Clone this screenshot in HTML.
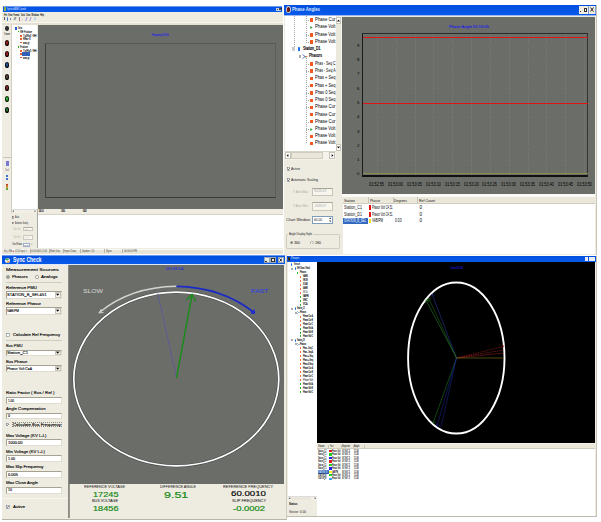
<!DOCTYPE html>
<html><head><meta charset="utf-8">
<style>
html,body{margin:0;padding:0;background:#fff;}
body{width:601px;height:522px;position:relative;overflow:hidden;font-family:"Liberation Sans",sans-serif;}
.a{position:absolute;box-sizing:border-box;}
.bg{background:#EEEBE0;}
.tb{background:linear-gradient(#004fe0,#0a5aea);}
.gr{background:#6B6D69;}
.wh{background:#fff;}
.t{position:absolute;white-space:nowrap;line-height:1;}
</style></head><body>
<!-- ===== TOP-LEFT WINDOW ===== -->
<div class="a bg" style="left:2px;top:6px;width:281px;height:248px;"></div>
<div class="a tb" style="left:3px;top:6px;width:279px;height:5.6px;"></div>
<div class="a" style="left:4px;top:7px;width:2px;height:4px;background:#8fb04a;"></div>
<div class="t" style="left: 7px; top: 7px; font-size: 4px; color: rgb(232, 238, 255); transform-origin: 0px 0px; transform: scaleX(0.455);">SynchroWAVE Console</div>
<div class="a" style="left:276px;top:7.5px;width:5px;height:3px;background:#c8cfdc;"></div>
<div class="a" style="left:276.5px;top:9px;width:1.5px;height:1px;background:#555;"></div>
<div class="a" style="left:278.8px;top:8px;width:1.8px;height:1.5px;border:0.5px solid #444;"></div>
<div class="a" style="left:281px;top:8.3px;width:1px;height:1px;background:#222;"></div>
<div class="a" style="left:3px;top:5.6px;width:279px;height:0.6px;background:#6b9af0;"></div>
<div class="t" style="left: 3.5px; top: 12.8px; font-size: 4px; color: rgb(17, 17, 17); word-spacing: 2px; -webkit-text-stroke: 0.12px rgb(17, 17, 17); transform-origin: 0px 0px; transform: scaleX(0.452);">File View Format Tools Data Windows Help</div>
<!-- toolbar icons -->
<div class="a" style="left:3.6px;top:17.2px;width:1px;height:3px;background:#555;"></div>
<div class="a" style="left:6.6px;top:16.8px;width:1.8px;height:3.8px;background:#3a78d0;border-radius:0.8px;"></div>
<div class="a" style="left:9.5px;top:17.5px;width:1.6px;height:2.6px;background:#5a88c0;"></div>
<div class="a" style="left:14.2px;top:17.2px;width:1.6px;height:3px;background:#9a9a9a;transform:skewX(-20deg);"></div>
<div class="a" style="left:18.6px;top:17.2px;width:1.5px;height:3.4px;background:linear-gradient(#7080c0,#d06050);"></div>
<div class="a" style="left:22px;top:18.5px;width:1.2px;height:1.5px;background:#c8c8c8;"></div>
<div class="a" style="left:25.8px;top:17px;width:1.2px;height:3.5px;background:#9a90e0;transform:skewX(-20deg);"></div>
<div class="a" style="left:29.6px;top:17px;width:1.2px;height:3.5px;background:#a090d0;transform:skewX(-20deg);"></div>
<div class="a" style="left:34.2px;top:17.3px;width:1.5px;height:3px;background:#b8d0f0;border-radius:0.6px;"></div>
<div class="a" style="left:2px;top:21.8px;width:281px;height:1px;background:#f8f6ee;"></div>
<div class="a" style="left:2px;top:22.8px;width:281px;height:2.4px;background:#e4e1d4;"></div>
<!-- left icon strip -->
<div class="a" style="left:3px;top:25px;width:8.5px;height:223px;background:#EFEDE3;border-right:1px solid #d0cdbf;"></div>
<div class="a" style="left:5px;top:26px;width:4.2px;height:5px;border-radius:50%;background:radial-gradient(ellipse at 50% 45%,#3a3a3a 0 12%,#1a1a1a 55%);"></div>
<div class="t" style="left: 3.8px; top: 33px; font-size: 3.5px; color: rgb(51, 51, 51); -webkit-text-stroke: 0.1px rgb(51, 51, 51); transform-origin: 0px 0px; transform: scaleX(0.601);">Tracer</div>
<div class="a" style="left:5px;top:40px;width:4.2px;height:6px;border-radius:50%;background:radial-gradient(ellipse at 50% 45%,#b02020 0 12%,#1a0a0a 55%);"></div>
<div class="a" style="left:5px;top:51px;width:4.2px;height:6px;border-radius:50%;background:radial-gradient(ellipse at 50% 45%,#c02020 0 12%,#1a0a0a 55%);"></div>
<div class="a" style="left:5px;top:62px;width:4.2px;height:6px;border-radius:50%;background:radial-gradient(ellipse at 50% 45%,#3060b0 0 12%,#0a1018 55%);"></div>
<div class="a" style="left:5px;top:74px;width:4.2px;height:6px;border-radius:50%;background:radial-gradient(ellipse at 50% 45%,#6a5040 0 12%,#101010 55%);"></div>
<div class="a" style="left:5px;top:85px;width:4.2px;height:6px;border-radius:50%;background:radial-gradient(ellipse at 50% 45%,#a03030 0 12%,#100808 55%);"></div>
<div class="a" style="left:5px;top:96px;width:4.2px;height:6px;border-radius:50%;background:radial-gradient(ellipse at 50% 45%,#40c040 0 12%,#0a300a 55%);"></div>
<div class="a" style="left:5px;top:107px;width:4.2px;height:6px;border-radius:50%;background:radial-gradient(ellipse at 50% 45%,#2a8a3a 0 12%,#080a08 55%);"></div>
<div class="a" style="left:3px;top:157px;width:8px;height:1px;background:#c8c5b8;"></div>
<div class="a" style="left:5.5px;top:161px;width:3px;height:5px;background:#7a7ad0;"></div>
<div class="t" style="left: 5px; top: 168.5px; font-size: 3px; color: rgb(102, 102, 102); transform-origin: 0px 0px; transform: scaleX(0.725);">Tool</div>
<div class="a" style="left:6px;top:175px;width:2px;height:2px;background:#3a70d0;"></div>
<div class="a" style="left:6px;top:178px;width:2px;height:2px;background:#3a70d0;"></div>
<div class="a" style="left:6px;top:184px;width:2px;height:6px;background:linear-gradient(#c03030,#d0a030,#40a040);"></div>
<!-- tree -->
<div class="a wh" style="left:12px;top:25px;width:25px;height:185px;"></div>
<div class="a" style="left:14.5px;top:26.5px;width:2.5px;height:3px;background:#2a5ad8;"></div>
<div class="t" style="left: 18px; top: 27.3px; font-size: 3.5px; color: rgb(0, 0, 0); -webkit-text-stroke: 0.1px rgb(0, 0, 0); transform-origin: 0px 0px; transform: scaleX(0.54);">Data</div>
<div class="a" style="left:17.5px;top:30.5px;width:1.5px;height:1.5px;background:#30a030;"></div>
<div class="t" style="left: 20px; top: 30.8px; font-size: 3.2px; color: rgb(0, 0, 0); -webkit-text-stroke: 0.1px rgb(0, 0, 0); transform-origin: 0px 0px; transform: scaleX(0.621);">GIE Producer</div>
<div class="a" style="left:20px;top:34.5px;width:1.5px;height:2px;background:#e06030;"></div>
<div class="t" style="left: 22.5px; top: 34.8px; font-size: 3.4px; color: rgb(0, 0, 0); -webkit-text-stroke: 0.1px rgb(0, 0, 0); transform-origin: 0px 0px; transform: scaleX(0.804);">Tx/Rx1 GH</div>
<div class="a" style="left:20px;top:37.5px;width:1.5px;height:2px;background:#e06030;"></div>
<div class="t" style="left: 22.5px; top: 37.8px; font-size: 3.4px; color: rgb(0, 0, 0); -webkit-text-stroke: 0.1px rgb(0, 0, 0); transform-origin: 0px 0px; transform: scaleX(0.71);">RBar 8</div>
<div class="a" style="left:20px;top:41.5px;width:1.5px;height:1.5px;background:#e06030;"></div>
<div class="t" style="left: 22.5px; top: 41.8px; font-size: 3.2px; color: rgb(0, 0, 0); -webkit-text-stroke: 0.1px rgb(0, 0, 0); transform-origin: 0px 0px; transform: scaleX(0.718);">wxx gt</div>
<div class="a" style="left:17.5px;top:46px;width:1.5px;height:1.5px;background:#30a030;"></div>
<div class="t" style="left: 20px; top: 46.3px; font-size: 3.2px; color: rgb(0, 0, 0); -webkit-text-stroke: 0.1px rgb(0, 0, 0); transform-origin: 0px 0px; transform: scaleX(0.618);">Producer</div>
<div class="a" style="left:20px;top:49.5px;width:1.5px;height:2px;background:#e06030;"></div>
<div class="t" style="left: 22.5px; top: 49.8px; font-size: 3.4px; color: rgb(0, 0, 0); -webkit-text-stroke: 0.1px rgb(0, 0, 0); transform-origin: 0px 0px; transform: scaleX(0.804);">Tx/Rx1 GH</div>
<div class="a" style="left:20px;top:53px;width:1.5px;height:1.5px;background:#e06030;"></div>
<div class="a" style="left:22px;top:52px;width:8px;height:3.5px;background:#3060b8;"></div>
<div class="a" style="left:20px;top:56.5px;width:1.5px;height:1.5px;background:#e06030;"></div>
<div class="t" style="left: 22.5px; top: 56.8px; font-size: 3.2px; color: rgb(0, 0, 0); -webkit-text-stroke: 0.1px rgb(0, 0, 0); transform-origin: 0px 0px; transform: scaleX(0.718);">wxx gt</div>
<!-- tree h-scroll -->
<div class="a" style="left:12px;top:209.3px;width:25px;height:3.7px;background:#F2F0E6;border-top:0.5px solid #ddd;"></div>
<svg class="a" style="left:12.2px;top:209.8px;" width="2.5" height="2.5" viewBox="0 0 10 10"><path d="M8 0 L2 5 L8 10Z" fill="#777"></path></svg>
<svg class="a" style="left:34px;top:209.8px;" width="2.5" height="2.5" viewBox="0 0 10 10"><path d="M2 0 L8 5 L2 10Z" fill="#777"></path></svg>
<!-- plot -->
<div class="a gr" style="left:37.5px;top:25px;width:245px;height:184px;"></div>
<div class="a" style="left:45px;top:43.2px;width:230.5px;height:154.8px;border-left:1.3px solid #3e403c;border-top:1px solid #565854;border-right:1px solid #5c5e5a;border-bottom:1.6px solid #3a3c38;"></div>
<div class="t" style="left: 151.5px; top: 34.4px; font-size: 3.6px; color: rgb(26, 26, 240); -webkit-text-stroke: 0.1px rgb(26, 26, 240); transform-origin: 0px 0px; transform: scaleX(0.567);">Frequency 01:53:5</div>
<!-- header strip -->
<div class="a" style="left:37.5px;top:209px;width:245.5px;height:6px;background:#EEEBE0;border-bottom:1px solid #d8d5c8;"></div>
<div class="t" style="left: 38.8px; top: 210.3px; font-size: 3.4px; color: rgb(17, 17, 17); -webkit-text-stroke: 0.15px rgb(17, 17, 17); transform-origin: 0px 0px; transform: scaleX(0.681);">00.0</div>
<div class="t" style="left: 61px; top: 210.3px; font-size: 3.4px; color: rgb(17, 17, 17); -webkit-text-stroke: 0.15px rgb(17, 17, 17); transform-origin: 0px 0px; transform: scaleX(0.681);">200.</div>
<div class="t" style="left: 83px; top: 210.3px; font-size: 3.4px; color: rgb(17, 17, 17); -webkit-text-stroke: 0.15px rgb(17, 17, 17); transform-origin: 0px 0px; transform: scaleX(0.926);">00</div>
<div class="a" style="left:37px;top:209px;width:1px;height:39px;background:#aaa;"></div>
<div class="a wh" style="left:38px;top:215px;width:245px;height:33px;"></div>
<!-- bottom left panel -->
<div class="a" style="left:11.3px;top:213px;width:26px;height:35.5px;background:#EEEBE0;"></div>
<svg class="a" style="left:12px;top:216.3px;" width="2.4" height="2.4" viewBox="0 0 10 10"><rect x="0.8" y="0.8" width="8.4" height="8.4" fill="#fff" stroke="#3a3a3a" stroke-width="1.6"></rect><path d="M2.3 5 L4.2 7 L7.8 2.8" stroke="#111" stroke-width="2" fill="none"></path></svg>
<div class="t" style="left: 14.6px; top: 217.1px; font-size: 2.6px; color: rgb(17, 17, 17); transform-origin: 0px 0px; transform: scaleX(0.749);">Auto</div>
<svg class="a" style="left:12px;top:222px;" width="2.4" height="2.4" viewBox="0 0 10 10"><rect x="0.8" y="0.8" width="8.4" height="8.4" fill="#fff" stroke="#3a3a3a" stroke-width="1.6"></rect><path d="M2.3 5 L4.2 7 L7.8 2.8" stroke="#111" stroke-width="2" fill="none"></path></svg>
<div class="t" style="left: 14.6px; top: 222.9px; font-size: 2.6px; color: rgb(17, 17, 17); transform-origin: 0px 0px; transform: scaleX(0.626);">Automatic Scaling</div>
<div class="t" style="left: 13px; top: 228.9px; font-size: 2.6px; color: rgb(184, 181, 168); transform-origin: 0px 0px; transform: scaleX(0.587);">Y Axis Max</div>
<div class="a" style="left:23.3px;top:226.5px;width:10px;height:4.8px;background:#F8F7F2;border:0.5px solid #ccc9bc;border-top-color:#b0ada0;"></div>
<div class="t" style="left: 24.3px; top: 228.6px; font-size: 2.5px; color: rgb(187, 187, 187); transform-origin: 0px 0px; transform: scaleX(0.653);">9028.4</div>
<div class="t" style="left: 13px; top: 236.5px; font-size: 2.6px; color: rgb(184, 181, 168); transform-origin: 0px 0px; transform: scaleX(0.622);">Y Axis Min</div>
<div class="a" style="left:23.3px;top:234.5px;width:10px;height:5px;background:#F8F7F2;border:0.5px solid #ccc9bc;"></div>
<div class="t" style="left: 24.3px; top: 236.7px; font-size: 2.5px; color: rgb(187, 187, 187); transform-origin: 0px 0px; transform: scaleX(0.78);">-3069</div>
<div class="t" style="left: 12px; top: 244.4px; font-size: 2.6px; color: rgb(17, 17, 17); transform-origin: 0px 0px; transform: scaleX(0.614);">Chart Window</div>
<div class="a" style="left:23.3px;top:242.5px;width:7px;height:4.6px;background:#fff;border:0.5px solid #9db0c8;"></div>
<div class="t" style="left: 24px; top: 244.5px; font-size: 2.5px; color: rgb(51, 51, 51); transform-origin: 0px 0px; transform: scaleX(0.718);">60.00</div>
<div class="t" style="left:31px;top:243.3px;font-size:3px;color:#444;">↕</div>
<!-- status bar -->
<div class="a" style="left:2px;top:248.5px;width:281px;height:5.5px;background:#E8E5D8;border-top:0.5px solid #fafaf4;"></div>
<div class="t" style="left: 3.5px; top: 249.8px; font-size: 2.8px; color: rgb(68, 68, 68); transform-origin: 0px 0px; transform: scaleX(0.704);">No_LINE</div>
<div class="t" style="left:12.5px;top:249.6px;font-size:3px;color:#e02020;">●</div>
<div class="t" style="left: 15px; top: 249.8px; font-size: 2.8px; color: rgb(68, 68, 68); transform-origin: 0px 0px; transform: scaleX(0.704);">12:52 Input 1</div>
<div class="t" style="left: 31px; top: 249.8px; font-size: 2.8px; color: rgb(68, 68, 68); transform-origin: 0px 0px; transform: scaleX(0.736);">01:00:0001 | 0:00</div>
<div class="t" style="left: 50px; top: 249.8px; font-size: 2.8px; color: rgb(68, 68, 68); transform-origin: 0px 0px; transform: scaleX(0.731);">Mode Data</div>
<div class="t" style="left: 64px; top: 249.8px; font-size: 2.8px; color: rgb(68, 68, 68); transform-origin: 0px 0px; transform: scaleX(0.93);">Input Data</div>
<div class="t" style="left: 82px; top: 249.8px; font-size: 2.8px; color: rgb(68, 68, 68); transform-origin: 0px 0px; transform: scaleX(0.877);">Update: 10</div>
<div class="t" style="left: 106px; top: 249.8px; font-size: 2.8px; color: rgb(68, 68, 68); transform-origin: 0px 0px; transform: scaleX(0.965);">Sync</div>
<div class="t" style="left: 124px; top: 249.8px; font-size: 2.8px; color: rgb(68, 68, 68); transform-origin: 0px 0px; transform: scaleX(0.819);">00:00:00 PM</div>
<div class="a" style="left:30px;top:249.2px;width:0.5px;height:4.3px;background:#b8b5a8;"></div>
<div class="a" style="left:48.5px;top:249.2px;width:0.5px;height:4.3px;background:#b8b5a8;"></div>
<div class="a" style="left:62.5px;top:249.2px;width:0.5px;height:4.3px;background:#b8b5a8;"></div>
<div class="a" style="left:80px;top:249.2px;width:0.5px;height:4.3px;background:#b8b5a8;"></div>
<div class="a" style="left:104px;top:249.2px;width:0.5px;height:4.3px;background:#b8b5a8;"></div>
<div class="a" style="left:122px;top:249.2px;width:0.5px;height:4.3px;background:#b8b5a8;"></div>
<!-- ===== TOP-RIGHT WINDOW ===== -->
<div class="a" style="left:283.5px;top:5px;width:313.5px;height:249.5px;background:#EEEBE0;border-right:1.5px solid #c9c6b8;"></div>
<div class="a tb" style="left:284px;top:5px;width:312px;height:9.5px;"></div>
<div class="a" style="left:284px;top:14.5px;width:312px;height:1.5px;background:#9cb8ee;"></div>
<div class="a" style="left:285.5px;top:6px;width:5px;height:7px;border-radius:50%;background:#2a0808;border:0.7px solid #d8d0d0;"></div>
<div class="a" style="left:287.2px;top:7.5px;width:1.8px;height:4px;border-radius:50%;background:#801810;"></div>
<div class="t" style="left: 292px; top: 7px; font-size: 5.5px; font-weight: bold; color: rgb(223, 232, 255); transform-origin: 0px 0px; transform: scaleX(0.78);">Phase Angles</div>
<div class="a" style="left:578.5px;top:5.5px;width:4.8px;height:8px;background:#f0ece0;"></div>
<div class="a" style="left:579.5px;top:10.5px;width:1.5px;height:1.5px;background:#333;"></div>
<div class="a" style="left:583.3px;top:5.5px;width:4.8px;height:8px;background:#f0ece0;"></div>
<div class="a" style="left:584px;top:7.5px;width:3px;height:4px;border:1px solid #333;"></div>
<div class="a" style="left:588.3px;top:5.5px;width:0.8px;height:8px;background:#7a9ad8;"></div>
<div class="a" style="left:589px;top:5.5px;width:5.5px;height:8px;background:#f0ece0;"></div>
<svg class="a" style="left:589.8px;top:7px;" width="4" height="5" viewBox="0 0 8 10"><path d="M1 1 L7 9 M7 1 L1 9" stroke="#222" stroke-width="2"></path></svg>
<div class="a" style="left:594.5px;top:5.5px;width:1px;height:8px;background:#7a9ad8;"></div>
<div class="a wh" style="left:285px;top:16px;width:51px;height:135px;"></div>
<div class="a" style="left:293.5px;top:16px;width:1px;height:32px;background:repeating-linear-gradient(#a8a8a8 0 1px,transparent 1px 2px);"></div>
<div class="a" style="left:305.5px;top:16px;width:1px;height:26px;background:repeating-linear-gradient(#a8a8a8 0 1px,transparent 1px 2px);"></div>
<div class="a" style="left:305.5px;top:58px;width:1px;height:86px;background:repeating-linear-gradient(#a8a8a8 0 1px,transparent 1px 2px);"></div>
<div class="a" style="left:305.5px;top:20px;width:4px;height:0.8px;background:repeating-linear-gradient(90deg,#a8a8a8 0 1px,transparent 1px 2px);"></div>
<div class="a" style="left:310px;top:18.3px;width:2.6px;height:3.4px;background:#f05a1e;"></div>
<div class="t" style="left: 314.8px; top: 17.9px; font-size: 4.8px; color: rgb(0, 0, 0); transform-origin: 0px 0px; transform: scaleX(0.904);">Phase Cur</div>
<div class="a" style="left:305.5px;top:27.5px;width:4px;height:0.8px;background:repeating-linear-gradient(90deg,#a8a8a8 0 1px,transparent 1px 2px);"></div>
<svg class="a" style="left:310px;top:25.9px;" width="3" height="3.2" viewBox="0 0 10 10"><path d="M1 0 L9 5 L1 10Z" fill="#30a030"></path></svg>
<div class="t" style="left: 314.8px; top: 25.4px; font-size: 4.8px; color: rgb(0, 0, 0); transform-origin: 0px 0px; transform: scaleX(0.894);">Phase Volt</div>
<div class="a" style="left:305.5px;top:35px;width:4px;height:0.8px;background:repeating-linear-gradient(90deg,#a8a8a8 0 1px,transparent 1px 2px);"></div>
<div class="a" style="left:310px;top:33.3px;width:2.6px;height:3.4px;background:#f05a1e;"></div>
<div class="t" style="left: 314.8px; top: 32.9px; font-size: 4.8px; color: rgb(0, 0, 0); transform-origin: 0px 0px; transform: scaleX(0.894);">Phase Volt</div>
<div class="a" style="left:305.5px;top:42px;width:4px;height:0.8px;background:repeating-linear-gradient(90deg,#a8a8a8 0 1px,transparent 1px 2px);"></div>
<div class="a" style="left:310px;top:40.3px;width:2.6px;height:3.4px;background:#f05a1e;"></div>
<div class="t" style="left: 314.8px; top: 39.9px; font-size: 4.8px; color: rgb(0, 0, 0); transform-origin: 0px 0px; transform: scaleX(0.894);">Phase Volt</div>
<div class="a" style="left:305.5px;top:64px;width:4px;height:0.8px;background:repeating-linear-gradient(90deg,#a8a8a8 0 1px,transparent 1px 2px);"></div>
<div class="a" style="left:310px;top:62.3px;width:2.6px;height:3.4px;background:#f05a1e;"></div>
<div class="t" style="left: 314.8px; top: 61.9px; font-size: 4.8px; color: rgb(0, 0, 0); transform-origin: 0px 0px; transform: scaleX(0.719);">Phas - Seq C</div>
<div class="a" style="left:305.5px;top:71px;width:4px;height:0.8px;background:repeating-linear-gradient(90deg,#a8a8a8 0 1px,transparent 1px 2px);"></div>
<div class="a" style="left:310px;top:69.3px;width:2.6px;height:3.4px;background:#f05a1e;"></div>
<div class="t" style="left: 314.8px; top: 68.9px; font-size: 4.8px; color: rgb(0, 0, 0); transform-origin: 0px 0px; transform: scaleX(0.732);">Phas - Seq A</div>
<div class="a" style="left:305.5px;top:78.5px;width:4px;height:0.8px;background:repeating-linear-gradient(90deg,#a8a8a8 0 1px,transparent 1px 2px);"></div>
<div class="a" style="left:310px;top:76.8px;width:2.6px;height:3.4px;background:#f05a1e;"></div>
<div class="t" style="left: 314.8px; top: 76.4px; font-size: 4.8px; color: rgb(0, 0, 0); transform-origin: 0px 0px; transform: scaleX(0.822);">Phas + Seq</div>
<div class="a" style="left:305.5px;top:85.8px;width:4px;height:0.8px;background:repeating-linear-gradient(90deg,#a8a8a8 0 1px,transparent 1px 2px);"></div>
<div class="a" style="left:310px;top:84.1px;width:2.6px;height:3.4px;background:#f05a1e;"></div>
<div class="t" style="left: 314.8px; top: 83.7px; font-size: 4.8px; color: rgb(0, 0, 0); transform-origin: 0px 0px; transform: scaleX(0.822);">Phas + Seq</div>
<div class="a" style="left:305.5px;top:93px;width:4px;height:0.8px;background:repeating-linear-gradient(90deg,#a8a8a8 0 1px,transparent 1px 2px);"></div>
<div class="a" style="left:310px;top:91.3px;width:2.6px;height:3.4px;background:#f05a1e;"></div>
<div class="t" style="left: 314.8px; top: 90.9px; font-size: 4.8px; color: rgb(0, 0, 0); transform-origin: 0px 0px; transform: scaleX(0.826);">Phas 0 Seq</div>
<div class="a" style="left:305.5px;top:100.2px;width:4px;height:0.8px;background:repeating-linear-gradient(90deg,#a8a8a8 0 1px,transparent 1px 2px);"></div>
<div class="a" style="left:310px;top:98.5px;width:2.6px;height:3.4px;background:#f05a1e;"></div>
<div class="t" style="left: 314.8px; top: 98.1px; font-size: 4.8px; color: rgb(0, 0, 0); transform-origin: 0px 0px; transform: scaleX(0.826);">Phas 0 Seq</div>
<div class="a" style="left:305.5px;top:107.4px;width:4px;height:0.8px;background:repeating-linear-gradient(90deg,#a8a8a8 0 1px,transparent 1px 2px);"></div>
<div class="a" style="left:310px;top:105.7px;width:2.6px;height:3.4px;background:#f05a1e;"></div>
<div class="t" style="left: 314.8px; top: 105.3px; font-size: 4.8px; color: rgb(0, 0, 0); transform-origin: 0px 0px; transform: scaleX(0.904);">Phase Cur</div>
<div class="a" style="left:305.5px;top:114.6px;width:4px;height:0.8px;background:repeating-linear-gradient(90deg,#a8a8a8 0 1px,transparent 1px 2px);"></div>
<div class="a" style="left:310px;top:112.89999999999999px;width:2.6px;height:3.4px;background:#f05a1e;"></div>
<div class="t" style="left: 314.8px; top: 112.5px; font-size: 4.8px; color: rgb(0, 0, 0); transform-origin: 0px 0px; transform: scaleX(0.904);">Phase Cur</div>
<div class="a" style="left:305.5px;top:121.8px;width:4px;height:0.8px;background:repeating-linear-gradient(90deg,#a8a8a8 0 1px,transparent 1px 2px);"></div>
<div class="a" style="left:310px;top:120.1px;width:2.6px;height:3.4px;background:#f05a1e;"></div>
<div class="t" style="left: 314.8px; top: 119.7px; font-size: 4.8px; color: rgb(0, 0, 0); transform-origin: 0px 0px; transform: scaleX(0.904);">Phase Cur</div>
<div class="a" style="left:305.5px;top:129.2px;width:4px;height:0.8px;background:repeating-linear-gradient(90deg,#a8a8a8 0 1px,transparent 1px 2px);"></div>
<svg class="a" style="left:310px;top:127.6px;" width="3" height="3.2" viewBox="0 0 10 10"><path d="M1 0 L9 5 L1 10Z" fill="#30a030"></path></svg>
<div class="t" style="left: 314.8px; top: 127.1px; font-size: 4.8px; color: rgb(0, 0, 0); transform-origin: 0px 0px; transform: scaleX(0.894);">Phase Volt</div>
<div class="a" style="left:305.5px;top:136.5px;width:4px;height:0.8px;background:repeating-linear-gradient(90deg,#a8a8a8 0 1px,transparent 1px 2px);"></div>
<div class="a" style="left:310px;top:134.8px;width:2.6px;height:3.4px;background:#f05a1e;"></div>
<div class="t" style="left: 314.8px; top: 134.4px; font-size: 4.8px; color: rgb(0, 0, 0); transform-origin: 0px 0px; transform: scaleX(0.894);">Phase Volt</div>
<div class="a" style="left:305.5px;top:143.5px;width:4px;height:0.8px;background:repeating-linear-gradient(90deg,#a8a8a8 0 1px,transparent 1px 2px);"></div>
<div class="a" style="left:310px;top:141.8px;width:2.6px;height:3.4px;background:#f05a1e;"></div>
<div class="t" style="left: 314.8px; top: 141.4px; font-size: 4.8px; color: rgb(0, 0, 0); transform-origin: 0px 0px; transform: scaleX(0.894);">Phase Volt</div>
<svg class="a" style="left:291.8px;top:47.3px;" width="3.6" height="4" viewBox="0 0 9 10"><rect x="0.5" y="0.5" width="8" height="9" fill="#fff" stroke="#9a9a9a" stroke-width="1"></rect><path d="M2 5 H7" stroke="#222" stroke-width="1.3"></path></svg>
<div class="a" style="left:298.3px;top:47px;width:2px;height:4px;background:#1a70f0;border-radius:0.6px;"></div>
<div class="t" style="left: 303px; top: 47px; font-size: 4.8px; color: rgb(0, 0, 0); -webkit-text-stroke: 0.2px rgb(0, 0, 0); transform-origin: 0px 0px; transform: scaleX(0.737);">Station_D1</div>
<div class="a" style="left:298.5px;top:55px;width:1.5px;height:3px;border:0.5px solid #aaa;"></div>
<svg class="a" style="left:302px;top:54px;" width="6" height="5"><path d="M0.5 0.5 L3 2.5 L0.5 4.5" stroke="#2040c0" stroke-width="0.7" fill="none"></path><path d="M3 2.5 L5.5 2.5" stroke="#d04040" stroke-width="0.7"></path><path d="M3 2.5 L4.5 4.5" stroke="#30a030" stroke-width="0.7"></path></svg>
<div class="t" style="left: 309px; top: 54.3px; font-size: 4.6px; color: rgb(0, 0, 0); -webkit-text-stroke: 0.15px rgb(0, 0, 0); transform-origin: 0px 0px; transform: scaleX(0.771);">Phasors</div>
<div class="a" style="left:336px;top:16px;width:5.5px;height:135px;background:#F4F2EA;border-left:0.5px solid #e0ddd0;"></div>
<div class="a" style="left:336.3px;top:17px;width:5px;height:6.5px;background:#fff;border:0.5px solid #c8c5b8;"></div>
<svg class="a" style="left:337.3px;top:18.8px;" width="3" height="3" viewBox="0 0 10 10"><path d="M0 8 L5 2 L10 8Z" fill="#111"></path></svg>
<div class="a" style="left:336.3px;top:24px;width:5px;height:121px;background:#EBE8DC;"></div>
<div class="a" style="left:336.3px;top:144px;width:5px;height:6.5px;background:#fff;border:0.5px solid #c8c5b8;"></div>
<svg class="a" style="left:337.3px;top:145.8px;" width="3" height="3" viewBox="0 0 10 10"><path d="M0 2 L5 8 L10 2Z" fill="#111"></path></svg>
<div class="a" style="left:284.5px;top:151px;width:52px;height:9px;background:#F4F2EA;border-top:0.5px solid #d8d5c8;"></div>
<div class="a" style="left:285px;top:152px;width:5.5px;height:7px;background:#fff;border:0.5px solid #c8c5b8;"></div>
<svg class="a" style="left:286.3px;top:154px;" width="3" height="3" viewBox="0 0 10 10"><path d="M8 0 L2 5 L8 10Z" fill="#111"></path></svg>
<div class="a" style="left:290.5px;top:152px;width:32px;height:7px;background:#EAE7DA;border:0.5px solid #d0cdc0;"></div>
<div class="a" style="left:329px;top:152px;width:6px;height:7px;background:#fff;border:0.5px solid #c8c5b8;"></div>
<svg class="a" style="left:330.5px;top:154px;" width="3" height="3" viewBox="0 0 10 10"><path d="M2 0 L8 5 L2 10Z" fill="#111"></path></svg>
<div class="a" style="left:336px;top:151px;width:6px;height:9px;background:#EEEBE0;"></div>
<svg class="a" style="left:286.5px;top:167px;" width="3.8" height="3.8" viewBox="0 0 10 10"><rect x="0.6" y="0.6" width="8.8" height="8.8" fill="#fff" stroke="#4a5a6a" stroke-width="1.2"></rect><path d="M2.4 4.8 L4.3 7 L7.8 2.8" stroke="#000" stroke-width="1.5" fill="none"></path></svg>
<div class="t" style="left: 291px; top: 166.8px; font-size: 4px; color: rgb(34, 34, 34); transform-origin: 0px 0px; transform: scaleX(0.825);">Active</div>
<svg class="a" style="left:286.5px;top:178.3px;" width="3.8" height="3.8" viewBox="0 0 10 10"><rect x="0.6" y="0.6" width="8.8" height="8.8" fill="#fff" stroke="#4a5a6a" stroke-width="1.2"></rect><path d="M2.4 4.8 L4.3 7 L7.8 2.8" stroke="#000" stroke-width="1.5" fill="none"></path></svg>
<div class="t" style="left: 291px; top: 178px; font-size: 4px; color: rgb(34, 34, 34); transform-origin: 0px 0px; transform: scaleX(0.843);">Automatic Scaling</div>
<div class="t" style="left: 293px; top: 190.5px; font-size: 3.8px; color: rgb(176, 173, 160); transform-origin: 0px 0px; transform: scaleX(0.801);">Y Axis Max</div>
<div class="a" style="left:312px;top:187.5px;width:21px;height:8.5px;border:0.6px solid #c8c5b8;border-top:1px solid #a8a598;background:#F6F5EE;"></div>
<div class="t" style="left: 313.5px; top: 190px; font-size: 3.8px; color: rgb(170, 170, 170); transform-origin: 0px 0px; transform: scaleX(0.874);">9028.43</div>
<div class="t" style="left: 293px; top: 204.5px; font-size: 3.8px; color: rgb(176, 173, 160); transform-origin: 0px 0px; transform: scaleX(0.85);">Y Axis Min</div>
<div class="a" style="left:312px;top:201.5px;width:21px;height:9px;border:0.6px solid #c8c5b8;border-top:1px solid #a8a598;background:#F6F5EE;"></div>
<div class="t" style="left: 313.5px; top: 204.5px; font-size: 3.8px; color: rgb(170, 170, 170); transform-origin: 0px 0px; transform: scaleX(0.8);">-3069.07</div>
<div class="t" style="left: 285.5px; top: 218px; font-size: 4px; color: rgb(34, 34, 34); transform-origin: 0px 0px; transform: scaleX(0.955);">Chart Window</div>
<div class="a" style="left:312px;top:215.5px;width:21px;height:8.5px;border:0.6px solid #7f9db9;background:#fff;"></div>
<div class="t" style="left: 313.5px; top: 218px; font-size: 4.4px; color: rgb(17, 17, 17); transform-origin: 0px 0px; transform: scaleX(0.727);">60.00</div>
<svg class="a" style="left:328.5px;top:216.5px;" width="2.6" height="2.6" viewBox="0 0 10 10"><path d="M0 8 L5 2 L10 8Z" fill="#444"></path></svg>
<svg class="a" style="left:328.5px;top:220px;" width="2.6" height="2.6" viewBox="0 0 10 10"><path d="M0 2 L5 8 L10 2Z" fill="#444"></path></svg>
<div class="a" style="left:286px;top:234px;width:53.5px;height:15px;border:0.6px solid #d0cdc0;border-radius:1px;"></div>
<div class="a bg" style="left:288px;top:231.5px;width:25px;height:4px;"></div>
<div class="t" style="left: 288.5px; top: 232px; font-size: 4.4px; color: rgb(17, 17, 17); transform-origin: 0px 0px; transform: scaleX(0.608);">Angle Display Style</div>
<svg class="a" style="left:289.5px;top:240.8px;" width="3.6" height="3.6" viewBox="0 0 10 10"><circle cx="5" cy="5" r="4" fill="#fff" stroke="#555" stroke-width="1.2"></circle><circle cx="5" cy="5" r="2" fill="#222"></circle></svg>
<div class="t" style="left: 294px; top: 241px; font-size: 4.4px; color: rgb(17, 17, 17); transform-origin: 0px 0px; transform: scaleX(0.819);">360</div>
<svg class="a" style="left:310px;top:240.8px;" width="3.6" height="3.6" viewBox="0 0 10 10"><circle cx="5" cy="5" r="4" fill="#fff" stroke="#555" stroke-width="1.2"></circle></svg>
<div class="t" style="left: 314.5px; top: 241px; font-size: 4.4px; color: rgb(17, 17, 17); transform-origin: 0px 0px; transform: scaleX(0.819);">180</div>
<div class="a gr" style="left:342px;top:16.5px;width:253px;height:177.5px;"></div>
<div class="t" style="left: 449px; top: 24.8px; font-size: 4.2px; color: rgb(34, 34, 224); -webkit-text-stroke: 0.1px rgb(34, 34, 224); transform-origin: 0px 0px; transform: scaleX(0.976);">Phase Angle 01:53:05</div>
<div class="a" style="left:376.8px;top:34px;width:0;height:141px;border-left:0.5px dotted #777975;"></div>
<div class="a" style="left:395.65000000000003px;top:34px;width:0;height:141px;border-left:0.5px dotted #777975;"></div>
<div class="a" style="left:414.5px;top:34px;width:0;height:141px;border-left:0.5px dotted #777975;"></div>
<div class="a" style="left:433.35px;top:34px;width:0;height:141px;border-left:0.5px dotted #777975;"></div>
<div class="a" style="left:452.20000000000005px;top:34px;width:0;height:141px;border-left:0.5px dotted #777975;"></div>
<div class="a" style="left:471.05px;top:34px;width:0;height:141px;border-left:0.5px dotted #777975;"></div>
<div class="a" style="left:489.90000000000003px;top:34px;width:0;height:141px;border-left:0.5px dotted #777975;"></div>
<div class="a" style="left:508.75px;top:34px;width:0;height:141px;border-left:0.5px dotted #777975;"></div>
<div class="a" style="left:527.6px;top:34px;width:0;height:141px;border-left:0.5px dotted #777975;"></div>
<div class="a" style="left:546.45px;top:34px;width:0;height:141px;border-left:0.5px dotted #777975;"></div>
<div class="a" style="left:565.3px;top:34px;width:0;height:141px;border-left:0.5px dotted #777975;"></div>
<div class="a" style="left:584.1500000000001px;top:34px;width:0;height:141px;border-left:0.5px dotted #777975;"></div>
<div class="a" style="left:363px;top:45.5px;width:224px;height:0;border-top:0.5px dotted #6f716d;"></div>
<div class="a" style="left:363px;top:59.8px;width:224px;height:0;border-top:0.5px dotted #6f716d;"></div>
<div class="a" style="left:363px;top:74.1px;width:224px;height:0;border-top:0.5px dotted #6f716d;"></div>
<div class="a" style="left:363px;top:88.4px;width:224px;height:0;border-top:0.5px dotted #6f716d;"></div>
<div class="a" style="left:363px;top:102.7px;width:224px;height:0;border-top:0.5px dotted #6f716d;"></div>
<div class="a" style="left:363px;top:117.0px;width:224px;height:0;border-top:0.5px dotted #6f716d;"></div>
<div class="a" style="left:363px;top:131.3px;width:224px;height:0;border-top:0.5px dotted #6f716d;"></div>
<div class="a" style="left:363px;top:145.6px;width:224px;height:0;border-top:0.5px dotted #6f716d;"></div>
<div class="a" style="left:363px;top:159.9px;width:224px;height:0;border-top:0.5px dotted #6f716d;"></div>
<div class="a" style="left:363px;top:174.2px;width:224px;height:0;border-top:0.5px dotted #6f716d;"></div>
<div class="a" style="left:362px;top:32.8px;width:226px;height:144.5px;border-left:1.2px solid #1a1a1a;border-top:1.2px solid #2a2a2a;border-right:1px solid #333;border-bottom:2px solid #111;"></div>
<div class="a" style="left:363px;top:36.6px;width:224.5px;height:1.9px;background:#e01414;"></div>
<div class="a" style="left:363px;top:102.6px;width:224.5px;height:1.9px;background:#e01414;"></div>
<div class="a" style="left:363px;top:173px;width:224.5px;height:0.8px;background:#8c8a4a;"></div>
<div class="t" style="left:357px;top:43.7px;font-size:4.4px;color:#000;">9</div>
<div class="t" style="left:357px;top:58.0px;font-size:4.4px;color:#000;">8</div>
<div class="t" style="left:357px;top:72.3px;font-size:4.4px;color:#000;">7</div>
<div class="t" style="left:357px;top:86.6px;font-size:4.4px;color:#000;">6</div>
<div class="t" style="left:357px;top:100.9px;font-size:4.4px;color:#000;">5</div>
<div class="t" style="left:357px;top:115.2px;font-size:4.4px;color:#000;">4</div>
<div class="t" style="left:357px;top:129.5px;font-size:4.4px;color:#000;">3</div>
<div class="t" style="left:357px;top:143.8px;font-size:4.4px;color:#000;">2</div>
<div class="t" style="left:357px;top:158.1px;font-size:4.4px;color:#000;">1</div>
<div class="t" style="left:357px;top:172.4px;font-size:4.4px;color:#000;">0</div>
<div class="t" style="left: 369.3px; top: 182.6px; font-size: 4.6px; color: rgb(0, 0, 0); transform-origin: 0px 0px; transform: scaleX(0.838);">01:52:55</div>
<div class="t" style="left: 388.2px; top: 182.6px; font-size: 4.6px; color: rgb(0, 0, 0); transform-origin: 0px 0px; transform: scaleX(0.838);">01:53:00</div>
<div class="t" style="left: 407px; top: 182.6px; font-size: 4.6px; color: rgb(0, 0, 0); transform-origin: 0px 0px; transform: scaleX(0.838);">01:53:05</div>
<div class="t" style="left: 425.9px; top: 182.6px; font-size: 4.6px; color: rgb(0, 0, 0); transform-origin: 0px 0px; transform: scaleX(0.838);">01:53:10</div>
<div class="t" style="left: 444.7px; top: 182.6px; font-size: 4.6px; color: rgb(0, 0, 0); transform-origin: 0px 0px; transform: scaleX(0.838);">01:53:15</div>
<div class="t" style="left: 463.6px; top: 182.6px; font-size: 4.6px; color: rgb(0, 0, 0); transform-origin: 0px 0px; transform: scaleX(0.838);">01:53:20</div>
<div class="t" style="left: 482.4px; top: 182.6px; font-size: 4.6px; color: rgb(0, 0, 0); transform-origin: 0px 0px; transform: scaleX(0.838);">01:53:25</div>
<div class="t" style="left: 501.2px; top: 182.6px; font-size: 4.6px; color: rgb(0, 0, 0); transform-origin: 0px 0px; transform: scaleX(0.838);">01:53:30</div>
<div class="t" style="left: 520.1px; top: 182.6px; font-size: 4.6px; color: rgb(0, 0, 0); transform-origin: 0px 0px; transform: scaleX(0.838);">01:53:35</div>
<div class="t" style="left: 539px; top: 182.6px; font-size: 4.6px; color: rgb(0, 0, 0); transform-origin: 0px 0px; transform: scaleX(0.838);">01:53:40</div>
<div class="t" style="left: 557.8px; top: 182.6px; font-size: 4.6px; color: rgb(0, 0, 0); transform-origin: 0px 0px; transform: scaleX(0.838);">01:53:45</div>
<div class="t" style="left: 576.7px; top: 182.6px; font-size: 4.6px; color: rgb(0, 0, 0); transform-origin: 0px 0px; transform: scaleX(0.838);">01:53:50</div>
<div class="a" style="left:342px;top:194px;width:253px;height:2.5px;background:#fafaf6;"></div>
<div class="a" style="left:342.5px;top:196.5px;width:252.5px;height:7px;background:#EBE8DA;border-bottom:0.8px solid #d0cdbf;"></div>
<div class="a" style="left:367.5px;top:197px;width:0.7px;height:6px;background:#c8c5b6;"></div>
<div class="a" style="left:392.5px;top:197px;width:0.7px;height:6px;background:#c8c5b6;"></div>
<div class="a" style="left:416.6px;top:197px;width:0.7px;height:6px;background:#c8c5b6;"></div>
<div class="t" style="left: 344px; top: 198.5px; font-size: 4.4px; color: rgb(17, 17, 17); transform-origin: 0px 0px; transform: scaleX(0.805);">Station</div>
<div class="t" style="left: 369.5px; top: 198.5px; font-size: 4.4px; color: rgb(17, 17, 17); transform-origin: 0px 0px; transform: scaleX(0.718);">Phasor</div>
<div class="t" style="left: 394px; top: 198.5px; font-size: 4.4px; color: rgb(17, 17, 17); transform-origin: 0px 0px; transform: scaleX(0.783);">Degrees</div>
<div class="t" style="left: 418.5px; top: 198.5px; font-size: 4.4px; color: rgb(17, 17, 17); transform-origin: 0px 0px; transform: scaleX(0.809);">Ref Count</div>
<div class="a wh" style="left:342.5px;top:203.5px;width:252.5px;height:50.5px;"></div>
<div class="t" style="left: 344px; top: 205.7px; font-size: 4.6px; color: rgb(17, 17, 17); transform-origin: 0px 0px; transform: scaleX(0.792);">Station_C1</div>
<div class="a" style="left:368.8px;top:205.1px;width:2.6px;height:4.8px;background:#e01010;"></div>
<div class="t" style="left: 372px; top: 205.7px; font-size: 4.6px; color: rgb(0, 0, 0); transform-origin: 0px 0px; transform: scaleX(0.554);">Phasor Volt C4,51</div>
<div class="t" style="left:419.5px;top:205.7px;font-size:4.6px;color:#000;">0</div>
<div class="t" style="left: 344px; top: 212.6px; font-size: 4.6px; color: rgb(17, 17, 17); transform-origin: 0px 0px; transform: scaleX(0.792);">Station_D1</div>
<div class="a" style="left:368.8px;top:212.0px;width:2.6px;height:4.8px;background:#e01010;"></div>
<div class="t" style="left: 372px; top: 212.6px; font-size: 4.6px; color: rgb(0, 0, 0); transform-origin: 0px 0px; transform: scaleX(0.554);">Phasor Volt C4,51</div>
<div class="t" style="left:419.5px;top:212.6px;font-size:4.6px;color:#000;">0</div>
<div class="a" style="left:343px;top:218px;width:24.5px;height:5.6px;background:#3168c0;"></div>
<div class="t" style="left: 344px; top: 219.2px; font-size: 4.6px; color: rgb(255, 255, 255); transform-origin: 0px 0px; transform: scaleX(0.61);">STATION_B_SEL</div>
<div class="a" style="left:368.8px;top:218.6px;width:2.6px;height:4.8px;background:#f0e020;"></div>
<div class="t" style="left: 372px; top: 219.2px; font-size: 4.6px; color: rgb(0, 0, 0); transform-origin: 0px 0px; transform: scaleX(0.646);">VAB/PM</div>
<div class="t" style="left: 394.8px; top: 219.2px; font-size: 4.6px; color: rgb(0, 0, 0); transform-origin: 0px 0px; transform: scaleX(0.726);">0.03</div>
<div class="t" style="left:419.5px;top:219.2px;font-size:4.6px;color:#000;">0</div>
<!-- ===== BOTTOM-LEFT WINDOW ===== -->
<div class="a" style="left:1.5px;top:254.5px;width:285px;height:265px;background:#EEEBE0;border-right:1px solid #d0cdc0;border-bottom:1.5px solid #b8b5a8;"></div>
<div class="a" style="left:2px;top:255px;width:283px;height:0.8px;background:#6a9af0;"></div>
<div class="a" style="left:2px;top:255.7px;width:283px;height:8.5px;background:linear-gradient(#004fe0,#0a5aea);"></div>
<div class="a" style="left:2px;top:264.2px;width:283px;height:1px;background:#dfe8f8;"></div>
<svg class="a" style="left:4.3px;top:256.5px;" width="6.4" height="6.6" viewBox="0 0 10 10"><circle cx="5.5" cy="5.5" r="4" fill="#f0f0e8"></circle><path d="M1.5 4 Q4 0.5 8 2.5 L6 5.5 Z" fill="#3a9a5a"></path><path d="M4 9 Q8 9.5 9.5 6 L6 6.5 Z" fill="#e08a40"></path></svg>
<div class="t" style="left: 12.5px; top: 256.5px; font-size: 6.6px; color: rgb(255, 255, 255); font-weight: bold; transform-origin: 0px 0px; transform: scaleX(0.762);">Sync Check</div>
<div class="a" style="left:264px;top:256.5px;width:5.8px;height:6.8px;background:#eeeae0;border:0.5px solid #9ab;"></div>
<div class="a" style="left:270px;top:256.5px;width:5.8px;height:6.8px;background:#eeeae0;border:0.5px solid #9ab;"></div>
<div class="a" style="left:265px;top:261px;width:2px;height:1px;background:#333;"></div>
<div class="a" style="left:271px;top:258px;width:3.8px;height:3.8px;border:0.8px solid #333;border-top-width:1.3px;"></div>
<div class="a" style="left:277.5px;top:256.5px;width:6px;height:6.8px;background:#f6f4ee;border:0.5px solid #9ab;"></div>
<svg class="a" style="left:278.8px;top:258px;" width="3.6" height="4" viewBox="0 0 8 10"><path d="M1 1 L7 9 M7 1 L1 9" stroke="#111" stroke-width="2.2"></path></svg>
<div class="a" style="left:2px;top:265px;width:66px;height:233px;background:#EEEBE0;"></div>
<div class="a" style="left:67.5px;top:265px;width:1.2px;height:253px;background:#8a8a84;"></div>
<div class="t" style="left: 5.5px; top: 268px; font-size: 4.4px; color: rgb(0, 0, 0); -webkit-text-stroke: 0.12px rgb(0, 0, 0); transform-origin: 0px 0px; transform: scaleX(1.189);">Measurement Sources</div>
<svg class="a" style="left:5.5px;top:275px;" width="4" height="4" viewBox="0 0 10 10"><circle cx="5" cy="5" r="4" fill="#fff" stroke="#555" stroke-width="1.2"></circle><circle cx="5" cy="5" r="2" fill="#222"></circle></svg>
<div class="t" style="left: 11.5px; top: 275.2px; font-size: 4.4px; color: rgb(0, 0, 0); -webkit-text-stroke: 0.12px rgb(0, 0, 0); transform-origin: 0px 0px; transform: scaleX(0.962);">Phasors</div>
<svg class="a" style="left:34.5px;top:275px;" width="4" height="4" viewBox="0 0 10 10"><circle cx="5" cy="5" r="4" fill="#fff" stroke="#555" stroke-width="1.2"></circle></svg>
<div class="t" style="left: 40.5px; top: 275.2px; font-size: 4.4px; color: rgb(0, 0, 0); -webkit-text-stroke: 0.12px rgb(0, 0, 0); transform-origin: 0px 0px; transform: scaleX(1.039);">Analogs</div>
<div class="a" style="left:6px;top:281.8px;width:56px;height:0.7px;background:#cfccbe;"></div>
<div class="t" style="left: 5.5px; top: 286px; font-size: 4.4px; color: rgb(0, 0, 0); -webkit-text-stroke: 0.12px rgb(0, 0, 0); transform-origin: 0px 0px; transform: scaleX(0.992);">Reference PMU</div>
<div class="a" style="left:6px;top:291px;width:56px;height:8px;background:#fff;border:0.8px solid #a5a294;border-right-color:#e0ddd0;border-bottom-color:#e0ddd0;"></div>
<div class="t" style="left: 7px; top: 293.4px; font-size: 4.4px; color: rgb(0, 0, 0); -webkit-text-stroke: 0.12px rgb(0, 0, 0); transform-origin: 0px 0px; transform: scaleX(0.945);">STATION_B_SEL451</div>
<div class="a" style="left:55px;top:291.8px;width:6.2px;height:6.4px;background:#f4f3ee;border:0.5px solid #c8c5b8;"></div>
<svg class="a" style="left:56.4px;top:293.4px;" width="3.4" height="3.4" viewBox="0 0 10 10"><path d="M0 2 L5 8 L10 2Z" fill="#000"></path></svg>
<div class="t" style="left: 5.5px; top: 301.5px; font-size: 4.4px; color: rgb(0, 0, 0); -webkit-text-stroke: 0.12px rgb(0, 0, 0); transform-origin: 0px 0px; transform: scaleX(0.989);">Reference Phasor</div>
<div class="a" style="left:6px;top:307px;width:56px;height:7.800000000000011px;background:#fff;border:0.8px solid #a5a294;border-right-color:#e0ddd0;border-bottom-color:#e0ddd0;"></div>
<div class="t" style="left: 7px; top: 309.3px; font-size: 4.4px; color: rgb(0, 0, 0); -webkit-text-stroke: 0.12px rgb(0, 0, 0); transform-origin: 0px 0px; transform: scaleX(0.738);">VAB/PM</div>
<div class="a" style="left:55px;top:307.8px;width:6.2px;height:6.200000000000012px;background:#f4f3ee;border:0.5px solid #c8c5b8;"></div>
<svg class="a" style="left:56.4px;top:309.29999999999995px;" width="3.4" height="3.4" viewBox="0 0 10 10"><path d="M0 2 L5 8 L10 2Z" fill="#000"></path></svg>
<svg class="a" style="left:6px;top:333.2px;" width="3.6" height="3.6" viewBox="0 0 10 10"><rect x="0.6" y="0.6" width="8.8" height="8.8" fill="#fff" stroke="#4a5a6a" stroke-width="1.2"></rect></svg>
<div class="t" style="left: 13px; top: 333px; font-size: 4.4px; color: rgb(0, 0, 0); -webkit-text-stroke: 0.12px rgb(0, 0, 0); transform-origin: 0px 0px; transform: scaleX(0.973);">Calculate Ref Frequency</div>
<div class="a" style="left:6px;top:340px;width:56px;height:0.7px;background:#cfccbe;"></div>
<div class="t" style="left: 5.5px; top: 344px; font-size: 4.4px; color: rgb(0, 0, 0); -webkit-text-stroke: 0.12px rgb(0, 0, 0); transform-origin: 0px 0px; transform: scaleX(0.89);">Bus PMU</div>
<div class="a" style="left:6px;top:349.8px;width:56px;height:6.399999999999977px;background:#fff;border:0.8px solid #a5a294;border-right-color:#e0ddd0;border-bottom-color:#e0ddd0;"></div>
<div class="t" style="left: 7px; top: 351.4px; font-size: 4.4px; color: rgb(0, 0, 0); -webkit-text-stroke: 0.12px rgb(0, 0, 0); transform-origin: 0px 0px; transform: scaleX(0.966);">Station_C1</div>
<div class="a" style="left:55px;top:350.6px;width:6.2px;height:4.799999999999978px;background:#f4f3ee;border:0.5px solid #c8c5b8;"></div>
<svg class="a" style="left:56.4px;top:351.4px;" width="3.4" height="3.4" viewBox="0 0 10 10"><path d="M0 2 L5 8 L10 2Z" fill="#000"></path></svg>
<div class="t" style="left: 5.5px; top: 359.8px; font-size: 4.4px; color: rgb(0, 0, 0); -webkit-text-stroke: 0.12px rgb(0, 0, 0); transform-origin: 0px 0px; transform: scaleX(0.947);">Bus Phasor</div>
<div class="a" style="left:6px;top:365.2px;width:56px;height:7.0px;background:#fff;border:0.8px solid #a5a294;border-right-color:#e0ddd0;border-bottom-color:#e0ddd0;"></div>
<div class="t" style="left: 7px; top: 367.1px; font-size: 4.4px; color: rgb(0, 0, 0); -webkit-text-stroke: 0.12px rgb(0, 0, 0); transform-origin: 0px 0px; transform: scaleX(0.773);">Phasor Volt C=A</div>
<div class="a" style="left:55px;top:366.0px;width:6.2px;height:5.4px;background:#f4f3ee;border:0.5px solid #c8c5b8;"></div>
<svg class="a" style="left:56.4px;top:367.09999999999997px;" width="3.4" height="3.4" viewBox="0 0 10 10"><path d="M0 2 L5 8 L10 2Z" fill="#000"></path></svg>
<div class="t" style="left: 5.5px; top: 391.1px; font-size: 4.4px; color: rgb(0, 0, 0); -webkit-text-stroke: 0.12px rgb(0, 0, 0); transform-origin: 0px 0px; transform: scaleX(0.999);">Ratio Factor ( Bus / Ref )</div>
<div class="a" style="left:6px;top:397px;width:56px;height:6.600000000000023px;background:#fff;border:0.8px solid #a5a294;border-right-color:#e0ddd0;border-bottom-color:#e0ddd0;"></div>
<div class="t" style="left: 7.5px; top: 398.7px; font-size: 4.4px; color: rgb(0, 0, 0); -webkit-text-stroke: 0.12px rgb(0, 0, 0); transform-origin: 0px 0px; transform: scaleX(0.702);">1.00</div>
<div class="t" style="left: 5.5px; top: 407px; font-size: 4.4px; color: rgb(0, 0, 0); -webkit-text-stroke: 0.12px rgb(0, 0, 0); transform-origin: 0px 0px; transform: scaleX(0.969);">Angle Compensation</div>
<div class="a" style="left:6px;top:412.5px;width:56px;height:6.699999999999989px;background:#fff;border:0.8px solid #a5a294;border-right-color:#e0ddd0;border-bottom-color:#e0ddd0;"></div>
<div class="t" style="left: 7.5px; top: 414.25px; font-size: 4.4px; color: rgb(0, 0, 0); -webkit-text-stroke: 0.12px rgb(0, 0, 0); transform-origin: 0px 0px; transform: scaleX(0.815);">0</div>
<svg class="a" style="left:5.6px;top:422.5px;" width="3.6" height="3.6" viewBox="0 0 10 10"><rect x="0.6" y="0.6" width="8.8" height="8.8" fill="#fff" stroke="#4a5a6a" stroke-width="1.2"></rect><path d="M2.4 4.8 L4.3 7 L7.8 2.8" stroke="#000" stroke-width="1.5" fill="none"></path></svg>
<div class="a" style="left:12px;top:422.3px;width:49.5px;height:5px;border:0.5px dotted #8a887e;"></div>
<div class="t" style="left: 12.7px; top: 422.7px; font-size: 4.4px; color: rgb(0, 0, 0); -webkit-text-stroke: 0.12px rgb(0, 0, 0); transform-origin: 0px 0px; transform: scaleX(0.978);">Calculate Bus Frequency</div>
<div class="t" style="left: 5.5px; top: 433.5px; font-size: 4.4px; color: rgb(0, 0, 0); -webkit-text-stroke: 0.12px rgb(0, 0, 0); transform-origin: 0px 0px; transform: scaleX(0.97);">Max Voltage (KV L-L)</div>
<div class="a" style="left:6px;top:439.3px;width:56px;height:6.699999999999989px;background:#fff;border:0.8px solid #a5a294;border-right-color:#e0ddd0;border-bottom-color:#e0ddd0;"></div>
<div class="t" style="left: 7.5px; top: 441.05px; font-size: 4.4px; color: rgb(0, 0, 0); -webkit-text-stroke: 0.12px rgb(0, 0, 0); transform-origin: 0px 0px; transform: scaleX(0.913);">1000.00</div>
<div class="t" style="left: 5.5px; top: 449.7px; font-size: 4.4px; color: rgb(0, 0, 0); -webkit-text-stroke: 0.12px rgb(0, 0, 0); transform-origin: 0px 0px; transform: scaleX(0.963);">Min Voltage (KV L-L)</div>
<div class="a" style="left:6px;top:455.2px;width:56px;height:6.800000000000011px;background:#fff;border:0.8px solid #a5a294;border-right-color:#e0ddd0;border-bottom-color:#e0ddd0;"></div>
<div class="t" style="left: 7.5px; top: 457px; font-size: 4.4px; color: rgb(0, 0, 0); -webkit-text-stroke: 0.12px rgb(0, 0, 0); transform-origin: 0px 0px; transform: scaleX(0.819);">1.00</div>
<div class="t" style="left: 5.5px; top: 465.3px; font-size: 4.4px; color: rgb(0, 0, 0); -webkit-text-stroke: 0.12px rgb(0, 0, 0); transform-origin: 0px 0px; transform: scaleX(0.966);">Max Slip Frequency</div>
<div class="a" style="left:6px;top:470.7px;width:56px;height:6.900000000000034px;background:#fff;border:0.8px solid #a5a294;border-right-color:#e0ddd0;border-bottom-color:#e0ddd0;"></div>
<div class="t" style="left: 7.5px; top: 472.55px; font-size: 4.4px; color: rgb(0, 0, 0); -webkit-text-stroke: 0.12px rgb(0, 0, 0); transform-origin: 0px 0px; transform: scaleX(0.909);">0.005</div>
<div class="t" style="left: 5.5px; top: 481.1px; font-size: 4.4px; color: rgb(0, 0, 0); -webkit-text-stroke: 0.12px rgb(0, 0, 0); transform-origin: 0px 0px; transform: scaleX(0.971);">Max Close Angle</div>
<div class="a" style="left:6px;top:486.5px;width:56px;height:7.0px;background:#fff;border:0.8px solid #a5a294;border-right-color:#e0ddd0;border-bottom-color:#e0ddd0;"></div>
<div class="t" style="left: 7.5px; top: 488.4px; font-size: 4.4px; color: rgb(0, 0, 0); -webkit-text-stroke: 0.12px rgb(0, 0, 0); transform-origin: 0px 0px; transform: scaleX(0.818);">10</div>
<div class="a" style="left:2px;top:497.5px;width:65.5px;height:0.7px;background:#f8f6ee;"></div>
<svg class="a" style="left:6px;top:505px;" width="3.6" height="3.6" viewBox="0 0 10 10"><rect x="0.6" y="0.6" width="8.8" height="8.8" fill="#fff" stroke="#4a5a6a" stroke-width="1.2"></rect><path d="M2.4 4.8 L4.3 7 L7.8 2.8" stroke="#000" stroke-width="1.5" fill="none"></path></svg>
<div class="t" style="left: 13px; top: 505.2px; font-size: 4.4px; color: rgb(0, 0, 0); -webkit-text-stroke: 0.12px rgb(0, 0, 0); transform-origin: 0px 0px; transform: scaleX(1.003);">Active</div>
<div class="a" style="left:68.5px;top:265.2px;width:215.5px;height:218.5px;background:#6B6D69;"></div>
<div class="t" style="left: 166px; top: 268.3px; font-size: 3.8px; color: rgb(42, 42, 216); -webkit-text-stroke: 0.05px rgb(36, 36, 224); transform-origin: 0px 0px; transform: scaleX(1.184);">01:58:14</div>
<div class="t" style="left: 83px; top: 289.2px; font-size: 5.2px; color: rgb(216, 216, 216); transform-origin: 0px 0px; transform: scaleX(1.309);">SLOW</div>
<div class="t" style="left: 250.5px; top: 289.2px; font-size: 5.2px; color: rgb(42, 58, 232); transform-origin: 0px 0px; transform: scaleX(1.348);">FAST</div>
<svg class="a" style="left:68px;top:265px;" width="216" height="219" viewBox="68 265 216 219">
<ellipse cx="176.3" cy="379" rx="102.5" ry="86.8" fill="none" stroke="#454644" stroke-width="2.8"></ellipse>
<ellipse cx="176.3" cy="379" rx="102.5" ry="86.8" fill="none" stroke="#fff" stroke-width="1.7"></ellipse>
<path d="M176.5 286.3 Q130 287 99.5 312.5" fill="none" stroke="#d4d4d2" stroke-width="1.4"></path>
<path d="M101.5 309 L98.8 313 L103.5 312.5" fill="none" stroke="#d0d0d0" stroke-width="1"></path>
<path d="M176.5 286.3 Q222 287 254 312.5" fill="none" stroke="#1a2ac8" stroke-width="1.8"></path>
<path d="M251 313 L254.5 313 L254 309.5" fill="none" stroke="#1a2ad8" stroke-width="1.3"></path>
<line x1="176.5" y1="378" x2="157.5" y2="292.5" stroke="#4a4ac0" stroke-width="0.8" stroke-dasharray="1.5,1"></line>
<line x1="176.5" y1="378" x2="192" y2="295" stroke="#1e8a1e" stroke-width="1.5"></line>
<path d="M186.5 300 L192 294.5 L195.8 301.5" fill="none" stroke="#1e8a1e" stroke-width="1.4"></path>
</svg>
<div class="a" style="left:68.5px;top:483.7px;width:216px;height:34px;background:#EEEBE0;border-left:1px solid #9a9890;"></div>
<div class="t" style="left: 84px; top: 485.6px; font-size: 2.8px; color: rgb(17, 17, 17); transform-origin: 0px 0px; transform: scaleX(1.33);">REFERENCE VOLTAGE</div>
<div class="t" style="left: 93px; top: 490.6px; font-size: 7.2px; color: rgb(26, 140, 26); -webkit-text-stroke: 0.2px rgb(26, 140, 26); transform-origin: 0px 0px; transform: scaleX(1.275);">17245</div>
<div class="t" style="left: 92px; top: 499.9px; font-size: 2.8px; color: rgb(0, 0, 0); transform-origin: 0px 0px; transform: scaleX(1.345);">BUS VOLTAGE</div>
<div class="t" style="left: 93px; top: 504.6px; font-size: 7.2px; color: rgb(26, 140, 26); -webkit-text-stroke: 0.2px rgb(26, 140, 26); transform-origin: 0px 0px; transform: scaleX(1.275);">18456</div>
<div class="t" style="left: 160px; top: 485.6px; font-size: 2.8px; color: rgb(17, 17, 17); transform-origin: 0px 0px; transform: scaleX(1.286);">DIFFERENCE ANGLE</div>
<div class="t" style="left: 164.3px; top: 491.3px; font-size: 8.6px; color: rgb(26, 140, 26); -webkit-text-stroke: 0.2px rgb(26, 140, 26); transform-origin: 0px 0px; transform: scaleX(1.452);">9.51</div>
<div class="t" style="left: 223px; top: 485.6px; font-size: 2.8px; color: rgb(17, 17, 17); transform-origin: 0px 0px; transform: scaleX(1.405);">REFERENCE FREQUENCY</div>
<div class="t" style="left: 231px; top: 489.8px; font-size: 7.2px; color: rgb(0, 0, 0); -webkit-text-stroke: 0.15px rgb(0, 0, 0); transform-origin: 0px 0px; transform: scaleX(1.347);">60.0010</div>
<div class="t" style="left: 232px; top: 499.9px; font-size: 2.8px; color: rgb(0, 0, 0); transform-origin: 0px 0px; transform: scaleX(1.396);">SLIP FREQUENCY</div>
<div class="t" style="left: 233px; top: 504.6px; font-size: 7.2px; color: rgb(26, 140, 26); -webkit-text-stroke: 0.2px rgb(26, 140, 26); transform-origin: 0px 0px; transform: scaleX(1.312);">-0.0002</div>
<div class="a" style="left:284px;top:265px;width:2px;height:253px;background:#EEEBE0;"></div>
<!-- ===== BOTTOM-RIGHT WINDOW ===== -->
<div class="a" style="left:286.5px;top:255.5px;width:310px;height:261px;background:#EEEBE0;border-right:1px solid #c8c5b8;border-bottom:1px solid #c0bdb0;"></div>
<div class="a" style="left:287px;top:256px;width:309px;height:6px;background:linear-gradient(#004fe0,#0a5aea);"></div>
<div class="a" style="left:288.2px;top:256.8px;width:2px;height:4.5px;background:#3a2a20;border-radius:1px;"></div>
<div class="t" style="left: 291px; top: 257.2px; font-size: 3.6px; color: rgb(232, 240, 255); transform-origin: 0px 0px; transform: scaleX(0.607);">Phasors</div>
<div class="a" style="left:585px;top:256.5px;width:3px;height:4.5px;background:#e8ecf4;"></div>
<div class="a" style="left:588.5px;top:256.5px;width:3px;height:4.5px;background:#e8ecf4;"></div>
<div class="a" style="left:592px;top:256.5px;width:3px;height:4.5px;background:#e8ecf4;"></div>
<div class="a" style="left:288px;top:262.3px;width:28.8px;height:233.7px;background:#fff;"></div>
<div class="a" style="left:291px;top:263.0px;width:1.3px;height:3px;background:#1a70e0;border-radius:0.4px;"></div>
<div class="t" style="left: 293.5px; top: 263px; font-size: 3.1px; color: rgb(68, 68, 68); -webkit-text-stroke: 0.15px rgb(68, 68, 68); transform-origin: 0px 0px; transform: scaleX(0.528);">Network</div>
<div class="a" style="left:294.5px;top:267.0px;width:1.3px;height:3px;background:#1a70e0;border-radius:0.4px;"></div>
<div class="a" style="left:291.3px;top:267.5px;width:2px;height:2px;border:0.4px solid #aaa;"></div>
<div class="t" style="left: 297px; top: 267px; font-size: 3.1px; color: rgb(17, 17, 17); -webkit-text-stroke: 0.15px rgb(17, 17, 17); transform-origin: 0px 0px; transform: scaleX(0.532);">GIE Class 1 Bus5</div>
<div class="a" style="left:297px;top:271.5px;width:1px;height:2px;background:#30b030;"></div>
<div class="t" style="left: 300px; top: 271px; font-size: 3.1px; color: rgb(17, 17, 17); -webkit-text-stroke: 0.15px rgb(17, 17, 17); transform-origin: 0px 0px; transform: scaleX(0.528);">Phasors</div>
<div class="a" style="left:300px;top:275.5px;width:1px;height:2px;background:#f07040;"></div>
<div class="t" style="left: 303px; top: 275px; font-size: 3.1px; color: rgb(17, 17, 17); -webkit-text-stroke: 0.15px rgb(17, 17, 17); transform-origin: 0px 0px; transform: scaleX(0.527);">VABM</div>
<div class="a" style="left:300px;top:279.5px;width:1px;height:2px;background:#f07040;"></div>
<div class="t" style="left: 303px; top: 279px; font-size: 3.1px; color: rgb(17, 17, 17); -webkit-text-stroke: 0.15px rgb(17, 17, 17); transform-origin: 0px 0px; transform: scaleX(0.503);">VBCM</div>
<div class="a" style="left:300px;top:283.5px;width:1px;height:2px;background:#f07040;"></div>
<div class="t" style="left: 303px; top: 283px; font-size: 3.1px; color: rgb(17, 17, 17); -webkit-text-stroke: 0.15px rgb(17, 17, 17); transform-origin: 0px 0px; transform: scaleX(0.503);">VCAM</div>
<div class="a" style="left:300px;top:287.5px;width:1px;height:2px;background:#f07040;"></div>
<div class="t" style="left: 303px; top: 287px; font-size: 3.1px; color: rgb(17, 17, 17); -webkit-text-stroke: 0.15px rgb(17, 17, 17); transform-origin: 0px 0px; transform: scaleX(0.594);">IABM</div>
<div class="a" style="left:300px;top:291.5px;width:1px;height:2px;background:#f07040;"></div>
<div class="t" style="left: 303px; top: 291px; font-size: 3.1px; color: rgb(136, 136, 136); -webkit-text-stroke: 0.15px rgb(136, 136, 136); transform-origin: 0px 0px; transform: scaleX(0.622);">IBCA</div>
<div class="a" style="left:300px;top:295.5px;width:1px;height:2px;background:#30b030;"></div>
<div class="t" style="left: 303px; top: 295px; font-size: 3.1px; color: rgb(0, 0, 0); -webkit-text-stroke: 0.15px rgb(0, 0, 0); transform-origin: 0px 0px; transform: scaleX(0.48);">VAB/PM</div>
<div class="a" style="left:300px;top:299.5px;width:1px;height:2px;background:#30b030;"></div>
<div class="t" style="left: 303px; top: 299px; font-size: 3.1px; color: rgb(17, 17, 17); -webkit-text-stroke: 0.15px rgb(17, 17, 17); transform-origin: 0px 0px; transform: scaleX(0.706);">VBC</div>
<div class="a" style="left:300px;top:303.5px;width:1px;height:2px;background:#30b030;"></div>
<div class="t" style="left: 303px; top: 303px; font-size: 3.1px; color: rgb(17, 17, 17); -webkit-text-stroke: 0.15px rgb(17, 17, 17); transform-origin: 0px 0px; transform: scaleX(0.706);">VCA</div>
<div class="a" style="left:294.5px;top:307.0px;width:1.3px;height:3px;background:#1a70e0;border-radius:0.4px;"></div>
<div class="a" style="left:291.3px;top:307.5px;width:2px;height:2px;border:0.4px solid #aaa;"></div>
<div class="t" style="left: 297px; top: 307px; font-size: 3.1px; color: rgb(17, 17, 17); -webkit-text-stroke: 0.15px rgb(17, 17, 17); transform-origin: 0px 0px; transform: scaleX(0.522);">Station_C1</div>
<div class="a" style="left:294.5px;top:311.5px;width:2px;height:2px;border:0.4px solid #aaa;"></div>
<svg class="a" style="left:297px;top:311.0px;" width="3" height="3" viewBox="0 0 6 6"><path d="M0 0 L3 3 L0 6 M3 3 L6 3" stroke="#3050c0" stroke-width="0.8" fill="none"></path></svg>
<div class="t" style="left: 299.5px; top: 311px; font-size: 3.1px; color: rgb(17, 17, 17); -webkit-text-stroke: 0.15px rgb(17, 17, 17); transform-origin: 0px 0px; transform: scaleX(0.528);">Phasors</div>
<div class="a" style="left:300px;top:315.5px;width:1px;height:2px;background:#f07040;"></div>
<div class="t" style="left: 303px; top: 315px; font-size: 3.1px; color: rgb(17, 17, 17); -webkit-text-stroke: 0.15px rgb(17, 17, 17); transform-origin: 0px 0px; transform: scaleX(0.576);">Phase Cur A</div>
<div class="a" style="left:300px;top:319.5px;width:1px;height:2px;background:#f07040;"></div>
<div class="t" style="left: 303px; top: 319px; font-size: 3.1px; color: rgb(17, 17, 17); -webkit-text-stroke: 0.15px rgb(17, 17, 17); transform-origin: 0px 0px; transform: scaleX(0.57);">Phase Cur B</div>
<div class="a" style="left:300px;top:323.5px;width:1px;height:2px;background:#f07040;"></div>
<div class="t" style="left: 303px; top: 323px; font-size: 3.1px; color: rgb(17, 17, 17); -webkit-text-stroke: 0.15px rgb(17, 17, 17); transform-origin: 0px 0px; transform: scaleX(0.564);">Phase Cur C</div>
<div class="a" style="left:300px;top:327.5px;width:1px;height:2px;background:#30b030;"></div>
<div class="t" style="left: 303px; top: 327px; font-size: 3.1px; color: rgb(17, 17, 17); -webkit-text-stroke: 0.15px rgb(17, 17, 17); transform-origin: 0px 0px; transform: scaleX(0.57);">Phase Volt A</div>
<div class="a" style="left:300px;top:331.5px;width:1px;height:2px;background:#30b030;"></div>
<div class="t" style="left: 303px; top: 331px; font-size: 3.1px; color: rgb(17, 17, 17); -webkit-text-stroke: 0.15px rgb(17, 17, 17); transform-origin: 0px 0px; transform: scaleX(0.564);">Phase Volt B</div>
<div class="a" style="left:300px;top:335.3px;width:1px;height:2px;background:#30b030;"></div>
<div class="t" style="left: 303px; top: 334.8px; font-size: 3.1px; color: rgb(17, 17, 17); -webkit-text-stroke: 0.15px rgb(17, 17, 17); transform-origin: 0px 0px; transform: scaleX(0.559);">Phase Volt C</div>
<div class="a" style="left:294.5px;top:338.8px;width:1.3px;height:3px;background:#1a70e0;border-radius:0.4px;"></div>
<div class="a" style="left:291.3px;top:339.3px;width:2px;height:2px;border:0.4px solid #aaa;"></div>
<div class="t" style="left: 297px; top: 338.8px; font-size: 3.1px; color: rgb(17, 17, 17); -webkit-text-stroke: 0.15px rgb(17, 17, 17); transform-origin: 0px 0px; transform: scaleX(0.522);">Station_D1</div>
<div class="a" style="left:294.5px;top:343.2px;width:2px;height:2px;border:0.4px solid #aaa;"></div>
<svg class="a" style="left:297px;top:342.7px;" width="3" height="3" viewBox="0 0 6 6"><path d="M0 0 L3 3 L0 6 M3 3 L6 3" stroke="#3050c0" stroke-width="0.8" fill="none"></path></svg>
<div class="t" style="left: 299.5px; top: 342.7px; font-size: 3.1px; color: rgb(17, 17, 17); -webkit-text-stroke: 0.15px rgb(17, 17, 17); transform-origin: 0px 0px; transform: scaleX(0.528);">Phasors</div>
<div class="a" style="left:300px;top:347.3px;width:1px;height:2px;background:#f07040;"></div>
<div class="t" style="left: 303px; top: 346.8px; font-size: 3.1px; color: rgb(17, 17, 17); -webkit-text-stroke: 0.15px rgb(17, 17, 17); transform-origin: 0px 0px; transform: scaleX(0.543);">Phas - Seq C</div>
<div class="a" style="left:300px;top:351.3px;width:1px;height:2px;background:#f07040;"></div>
<div class="t" style="left: 303px; top: 350.8px; font-size: 3.1px; color: rgb(17, 17, 17); -webkit-text-stroke: 0.15px rgb(17, 17, 17); transform-origin: 0px 0px; transform: scaleX(0.554);">Phas - Seq A</div>
<div class="a" style="left:300px;top:355px;width:1px;height:2px;background:#f07040;"></div>
<div class="t" style="left: 303px; top: 354.5px; font-size: 3.1px; color: rgb(17, 17, 17); -webkit-text-stroke: 0.15px rgb(17, 17, 17); transform-origin: 0px 0px; transform: scaleX(0.621);">Phas + Seq</div>
<div class="a" style="left:300px;top:359px;width:1px;height:2px;background:#f07040;"></div>
<div class="t" style="left: 303px; top: 358.5px; font-size: 3.1px; color: rgb(17, 17, 17); -webkit-text-stroke: 0.15px rgb(17, 17, 17); transform-origin: 0px 0px; transform: scaleX(0.621);">Phas + Seq</div>
<div class="a" style="left:300px;top:363px;width:1px;height:2px;background:#f07040;"></div>
<div class="t" style="left: 303px; top: 362.5px; font-size: 3.1px; color: rgb(17, 17, 17); -webkit-text-stroke: 0.15px rgb(17, 17, 17); transform-origin: 0px 0px; transform: scaleX(0.625);">Phas 0 Seq</div>
<div class="a" style="left:300px;top:367.4px;width:1px;height:2px;background:#f07040;"></div>
<div class="t" style="left: 303px; top: 366.9px; font-size: 3.1px; color: rgb(17, 17, 17); -webkit-text-stroke: 0.15px rgb(17, 17, 17); transform-origin: 0px 0px; transform: scaleX(0.576);">Phase Cur A</div>
<div class="a" style="left:300px;top:371px;width:1px;height:2px;background:#f07040;"></div>
<div class="t" style="left: 303px; top: 370.5px; font-size: 3.1px; color: rgb(17, 17, 17); -webkit-text-stroke: 0.15px rgb(17, 17, 17); transform-origin: 0px 0px; transform: scaleX(0.57);">Phase Cur B</div>
<div class="a" style="left:300px;top:375px;width:1px;height:2px;background:#f07040;"></div>
<div class="t" style="left: 303px; top: 374.5px; font-size: 3.1px; color: rgb(17, 17, 17); -webkit-text-stroke: 0.15px rgb(17, 17, 17); transform-origin: 0px 0px; transform: scaleX(0.564);">Phase Cur C</div>
<div class="a" style="left:300px;top:379px;width:1px;height:2px;background:#f07040;"></div>
<div class="t" style="left: 303px; top: 378.5px; font-size: 3.1px; color: rgb(102, 102, 102); -webkit-text-stroke: 0.15px rgb(102, 102, 102); transform-origin: 0px 0px; transform: scaleX(0.676);">Phase Volt</div>
<div class="a" style="left:300px;top:383px;width:1px;height:2px;background:#30b030;"></div>
<div class="t" style="left: 303px; top: 382.5px; font-size: 3.1px; color: rgb(17, 17, 17); -webkit-text-stroke: 0.15px rgb(17, 17, 17); transform-origin: 0px 0px; transform: scaleX(0.57);">Phase Volt A</div>
<div class="a" style="left:300px;top:387px;width:1px;height:2px;background:#30b030;"></div>
<div class="t" style="left: 303px; top: 386.5px; font-size: 3.1px; color: rgb(17, 17, 17); -webkit-text-stroke: 0.15px rgb(17, 17, 17); transform-origin: 0px 0px; transform: scaleX(0.564);">Phase Volt B</div>
<div class="a" style="left:300px;top:391px;width:1px;height:2px;background:#30b030;"></div>
<div class="t" style="left: 303px; top: 390.5px; font-size: 3.1px; color: rgb(17, 17, 17); -webkit-text-stroke: 0.15px rgb(17, 17, 17); transform-origin: 0px 0px; transform: scaleX(0.559);">Phase Volt C</div>
<div class="a" style="left:288px;top:496px;width:28.8px;height:4px;background:#F4F2EA;border-top:0.5px solid #ddd;"></div>
<svg class="a" style="left:288.3px;top:496.6px;" width="2.8" height="2.8" viewBox="0 0 10 10"><path d="M8 0 L2 5 L8 10Z" fill="#666"></path></svg>
<svg class="a" style="left:313.6px;top:496.6px;" width="2.8" height="2.8" viewBox="0 0 10 10"><path d="M2 0 L8 5 L2 10Z" fill="#666"></path></svg>
<div class="a" style="left:290.8px;top:496.5px;width:20px;height:3px;background:#EAE7DA;"></div>
<div class="a" style="left:288px;top:500px;width:28.8px;height:16px;background:#EEEBE0;"></div>
<div class="t" style="left: 288.6px; top: 502.7px; font-size: 3.6px; color: rgb(0, 0, 0); font-weight: bold; transform-origin: 0px 0px; transform: scaleX(0.774);">Status</div>
<div class="t" style="left: 289px; top: 510.7px; font-size: 3.4px; color: rgb(34, 34, 34); transform-origin: 0px 0px; transform: scaleX(0.939);">Vector: 0.00</div>
<div class="a" style="left:316.5px;top:262px;width:1.5px;height:254px;background:#d6d3c8;"></div>
<div class="a" style="left:317.3px;top:262px;width:277.7px;height:180.5px;background:#000;"></div>
<div class="t" style="left: 450.3px; top: 266.6px; font-size: 3.4px; color: rgb(26, 26, 208); -webkit-text-stroke: 0.1px rgb(26, 26, 208); transform-origin: 0px 0px; transform: scaleX(0.772);">Time:01:58</div>
<svg class="a" style="left:317px;top:262px;" width="278" height="181" viewBox="317 262 278 181">
<ellipse cx="456.3" cy="358" rx="48.2" ry="75.5" fill="none" stroke="#fff" stroke-width="1.9"></ellipse>
<g stroke-width="0.55" fill="none">
<line x1="456.5" y1="358" x2="503.5" y2="346.5" stroke="#b02020" stroke-dasharray="1.6,0.8"></line>
<line x1="456.5" y1="358" x2="503.5" y2="350" stroke="#b02828" stroke-dasharray="1.6,0.8"></line>
<line x1="456.5" y1="358" x2="503.5" y2="353" stroke="#902020"></line>
<line x1="456.5" y1="358" x2="504" y2="358" stroke="#8a8020"></line>
<line x1="456.5" y1="358" x2="432" y2="294" stroke="#2a3aa0"></line>
<line x1="456.5" y1="358" x2="426" y2="300" stroke="#2a8a2a"></line>
<line x1="456.5" y1="358" x2="428.5" y2="298" stroke="#207020"></line>
<line x1="456.5" y1="358" x2="433" y2="423" stroke="#207a20"></line>
<line x1="456.5" y1="358" x2="437" y2="426" stroke="#1a2890"></line>
<line x1="456.5" y1="358" x2="441" y2="427" stroke="#1a2890"></line>
<path d="M430 296.5 L432 294 L434.5 295.5" stroke="#2a3aa0"></path>
<path d="M425.5 303 L426 300 L429 301" stroke="#2a8a2a"></path>
<path d="M427.5 301 L428.5 298 L431 299.5" stroke="#207020"></path>
<path d="M431.5 420.5 L433 423 L435.5 422" stroke="#207a20"></path>
<path d="M436 423.5 L437.5 426.5 L440 425.5" stroke="#1a2890"></path>
<path d="M502 344.5 L504 346 L502.5 348" stroke="#a02020"></path>
</g>
</svg>
<div class="a" style="left:317.3px;top:442.5px;width:277.7px;height:1.8px;background:#f4f2ea;"></div>
<div class="a" style="left:317.3px;top:444.3px;width:277.7px;height:4.8px;background:#EBE8DA;border-bottom:0.6px solid #cfccbe;"></div>
<div class="a" style="left:328px;top:444.6px;width:0.6px;height:4.2px;background:#c8c5b6;"></div>
<div class="a" style="left:341px;top:444.6px;width:0.6px;height:4.2px;background:#c8c5b6;"></div>
<div class="a" style="left:352.5px;top:444.6px;width:0.6px;height:4.2px;background:#c8c5b6;"></div>
<div class="a" style="left:364px;top:444.6px;width:0.6px;height:4.2px;background:#c8c5b6;"></div>
<div class="t" style="left: 317.8px; top: 445.2px; font-size: 3px; color: rgb(0, 0, 0); transform-origin: 0px 0px; transform: scaleX(0.696);">Station</div>
<div class="t" style="left: 330px; top: 445.2px; font-size: 3px; color: rgb(0, 0, 0); transform-origin: 0px 0px; transform: scaleX(0.368);">Phasor</div>
<div class="t" style="left: 342px; top: 445.2px; font-size: 3px; color: rgb(0, 0, 0); transform-origin: 0px 0px; transform: scaleX(0.571);">Magnitude</div>
<div class="t" style="left: 353.6px; top: 445.2px; font-size: 3px; color: rgb(0, 0, 0); transform-origin: 0px 0px; transform: scaleX(0.715);">Angle</div>
<div class="a" style="left:317.3px;top:449.1px;width:277.7px;height:67px;background:#fff;"></div>
<div class="t" style="left: 318px; top: 449.6px; font-size: 2.8px; color: rgb(17, 17, 17); -webkit-text-stroke: 0.1px rgb(17, 17, 17); transform-origin: 0px 0px; transform: scaleX(0.614);">Station_C1</div>
<div class="t" style="left: 332px; top: 449.6px; font-size: 2.8px; color: rgb(17, 17, 17); -webkit-text-stroke: 0.1px rgb(17, 17, 17); transform-origin: 0px 0px; transform: scaleX(0.594);">Phasor Volt</div>
<div class="a" style="left:329.4px;top:449.8px;width:2.2px;height:2.4px;background:#e02020;"></div>
<div class="t" style="left: 342px; top: 449.6px; font-size: 2.8px; color: rgb(17, 17, 17); -webkit-text-stroke: 0.1px rgb(17, 17, 17); transform-origin: 0px 0px; transform: scaleX(0.856);">37.97.1</div>
<div class="t" style="left: 353.5px; top: 449.6px; font-size: 2.8px; color: rgb(17, 17, 17); -webkit-text-stroke: 0.1px rgb(17, 17, 17); transform-origin: 0px 0px; transform: scaleX(0.643);">12.30</div>
<div class="t" style="left: 318px; top: 453.1px; font-size: 2.8px; color: rgb(17, 17, 17); -webkit-text-stroke: 0.1px rgb(17, 17, 17); transform-origin: 0px 0px; transform: scaleX(0.614);">Station_C1</div>
<div class="t" style="left: 332px; top: 453.1px; font-size: 2.8px; color: rgb(17, 17, 17); -webkit-text-stroke: 0.1px rgb(17, 17, 17); transform-origin: 0px 0px; transform: scaleX(0.594);">Phasor Volt</div>
<div class="a" style="left:329.4px;top:453.3px;width:2.2px;height:2.4px;background:#20d020;"></div>
<div class="t" style="left: 342px; top: 453.1px; font-size: 2.8px; color: rgb(17, 17, 17); -webkit-text-stroke: 0.1px rgb(17, 17, 17); transform-origin: 0px 0px; transform: scaleX(0.856);">37.97.1</div>
<div class="t" style="left: 353.5px; top: 453.1px; font-size: 2.8px; color: rgb(17, 17, 17); -webkit-text-stroke: 0.1px rgb(17, 17, 17); transform-origin: 0px 0px; transform: scaleX(0.643);">12.30</div>
<div class="t" style="left: 318px; top: 456.6px; font-size: 2.8px; color: rgb(17, 17, 17); -webkit-text-stroke: 0.1px rgb(17, 17, 17); transform-origin: 0px 0px; transform: scaleX(0.614);">Station_C1</div>
<div class="t" style="left: 332px; top: 456.6px; font-size: 2.8px; color: rgb(17, 17, 17); -webkit-text-stroke: 0.1px rgb(17, 17, 17); transform-origin: 0px 0px; transform: scaleX(0.594);">Phasor Volt</div>
<div class="a" style="left:329.4px;top:456.8px;width:2.2px;height:2.4px;background:#2020e0;"></div>
<div class="t" style="left: 342px; top: 456.6px; font-size: 2.8px; color: rgb(17, 17, 17); -webkit-text-stroke: 0.1px rgb(17, 17, 17); transform-origin: 0px 0px; transform: scaleX(0.856);">37.97.1</div>
<div class="t" style="left: 353.5px; top: 456.6px; font-size: 2.8px; color: rgb(17, 17, 17); -webkit-text-stroke: 0.1px rgb(17, 17, 17); transform-origin: 0px 0px; transform: scaleX(0.643);">12.30</div>
<div class="t" style="left: 318px; top: 460.1px; font-size: 2.8px; color: rgb(17, 17, 17); -webkit-text-stroke: 0.1px rgb(17, 17, 17); transform-origin: 0px 0px; transform: scaleX(0.614);">Station_C1</div>
<div class="t" style="left: 332px; top: 460.1px; font-size: 2.8px; color: rgb(17, 17, 17); -webkit-text-stroke: 0.1px rgb(17, 17, 17); transform-origin: 0px 0px; transform: scaleX(0.594);">Phasor Volt</div>
<div class="a" style="left:329.4px;top:460.3px;width:2.2px;height:2.4px;background:#e02020;"></div>
<div class="t" style="left: 342px; top: 460.1px; font-size: 2.8px; color: rgb(17, 17, 17); -webkit-text-stroke: 0.1px rgb(17, 17, 17); transform-origin: 0px 0px; transform: scaleX(0.856);">37.97.1</div>
<div class="t" style="left: 353.5px; top: 460.1px; font-size: 2.8px; color: rgb(17, 17, 17); -webkit-text-stroke: 0.1px rgb(17, 17, 17); transform-origin: 0px 0px; transform: scaleX(0.643);">12.30</div>
<div class="t" style="left: 318px; top: 463.6px; font-size: 2.8px; color: rgb(17, 17, 17); -webkit-text-stroke: 0.1px rgb(17, 17, 17); transform-origin: 0px 0px; transform: scaleX(0.614);">Station_C1</div>
<div class="t" style="left: 332px; top: 463.6px; font-size: 2.8px; color: rgb(17, 17, 17); -webkit-text-stroke: 0.1px rgb(17, 17, 17); transform-origin: 0px 0px; transform: scaleX(0.594);">Phasor Volt</div>
<div class="a" style="left:329.4px;top:463.8px;width:2.2px;height:2.4px;background:#20d020;"></div>
<div class="t" style="left: 342px; top: 463.6px; font-size: 2.8px; color: rgb(17, 17, 17); -webkit-text-stroke: 0.1px rgb(17, 17, 17); transform-origin: 0px 0px; transform: scaleX(0.856);">37.97.1</div>
<div class="t" style="left: 353.5px; top: 463.6px; font-size: 2.8px; color: rgb(17, 17, 17); -webkit-text-stroke: 0.1px rgb(17, 17, 17); transform-origin: 0px 0px; transform: scaleX(0.643);">12.30</div>
<div class="t" style="left: 318px; top: 467.1px; font-size: 2.8px; color: rgb(17, 17, 17); -webkit-text-stroke: 0.1px rgb(17, 17, 17); transform-origin: 0px 0px; transform: scaleX(0.614);">Station_C1</div>
<div class="t" style="left: 332px; top: 467.1px; font-size: 2.8px; color: rgb(17, 17, 17); -webkit-text-stroke: 0.1px rgb(17, 17, 17); transform-origin: 0px 0px; transform: scaleX(0.594);">Phasor Volt</div>
<div class="a" style="left:329.4px;top:467.3px;width:2.2px;height:2.4px;background:#2020e0;"></div>
<div class="t" style="left: 342px; top: 467.1px; font-size: 2.8px; color: rgb(17, 17, 17); -webkit-text-stroke: 0.1px rgb(17, 17, 17); transform-origin: 0px 0px; transform: scaleX(0.856);">37.97.1</div>
<div class="t" style="left: 353.5px; top: 467.1px; font-size: 2.8px; color: rgb(17, 17, 17); -webkit-text-stroke: 0.1px rgb(17, 17, 17); transform-origin: 0px 0px; transform: scaleX(0.643);">12.30</div>
<div class="a" style="left:317.5px;top:470.2px;width:11px;height:3.6px;background:#3168c0;"></div>
<div class="t" style="left: 318px; top: 470.6px; font-size: 2.8px; color: rgb(255, 255, 255); transform-origin: 0px 0px; transform: scaleX(0.594);">STATION_B</div>
<div class="t" style="left: 332px; top: 470.6px; font-size: 2.8px; color: rgb(0, 0, 0); font-weight: bold; transform-origin: 0px 0px; transform: scaleX(0.562);">VAB/PM</div>
<div class="a" style="left:329.4px;top:470.8px;width:2.2px;height:2.4px;background:#f0f020;"></div>
<div class="t" style="left: 342px; top: 470.6px; font-size: 2.8px; color: rgb(17, 17, 17); -webkit-text-stroke: 0.1px rgb(17, 17, 17); transform-origin: 0px 0px; transform: scaleX(0.856);">37.97.1</div>
<div class="t" style="left: 353.5px; top: 470.6px; font-size: 2.8px; color: rgb(17, 17, 17); -webkit-text-stroke: 0.1px rgb(17, 17, 17); transform-origin: 0px 0px; transform: scaleX(0.643);">12.30</div>
<div class="t" style="left: 318px; top: 473.9px; font-size: 2.8px; color: rgb(17, 17, 17); -webkit-text-stroke: 0.1px rgb(17, 17, 17); transform-origin: 0px 0px; transform: scaleX(0.509);">STATION_B1</div>
<div class="t" style="left: 332px; top: 473.9px; font-size: 2.8px; color: rgb(17, 17, 17); -webkit-text-stroke: 0.1px rgb(17, 17, 17); transform-origin: 0px 0px; transform: scaleX(0.594);">Phasor Volt</div>
<div class="a" style="left:329.4px;top:474.1px;width:2.2px;height:2.4px;background:#20d020;"></div>
<div class="t" style="left: 342px; top: 473.9px; font-size: 2.8px; color: rgb(17, 17, 17); -webkit-text-stroke: 0.1px rgb(17, 17, 17); transform-origin: 0px 0px; transform: scaleX(0.856);">37.97.1</div>
<div class="t" style="left: 353.5px; top: 473.9px; font-size: 2.8px; color: rgb(17, 17, 17); -webkit-text-stroke: 0.1px rgb(17, 17, 17); transform-origin: 0px 0px; transform: scaleX(0.643);">12.30</div>
<div class="t" style="left: 318px; top: 477.3px; font-size: 2.8px; color: rgb(17, 17, 17); -webkit-text-stroke: 0.1px rgb(17, 17, 17); transform-origin: 0px 0px; transform: scaleX(0.509);">STATION_B1</div>
<div class="t" style="left: 332px; top: 477.3px; font-size: 2.8px; color: rgb(17, 17, 17); -webkit-text-stroke: 0.1px rgb(17, 17, 17); transform-origin: 0px 0px; transform: scaleX(0.594);">Phasor Volt</div>
<div class="a" style="left:329.4px;top:477.5px;width:2.2px;height:2.4px;background:#40a0f0;"></div>
<div class="t" style="left: 342px; top: 477.3px; font-size: 2.8px; color: rgb(17, 17, 17); -webkit-text-stroke: 0.1px rgb(17, 17, 17); transform-origin: 0px 0px; transform: scaleX(0.856);">37.97.1</div>
<div class="t" style="left: 353.5px; top: 477.3px; font-size: 2.8px; color: rgb(17, 17, 17); -webkit-text-stroke: 0.1px rgb(17, 17, 17); transform-origin: 0px 0px; transform: scaleX(0.643);">12.30</div>
</body></html>
